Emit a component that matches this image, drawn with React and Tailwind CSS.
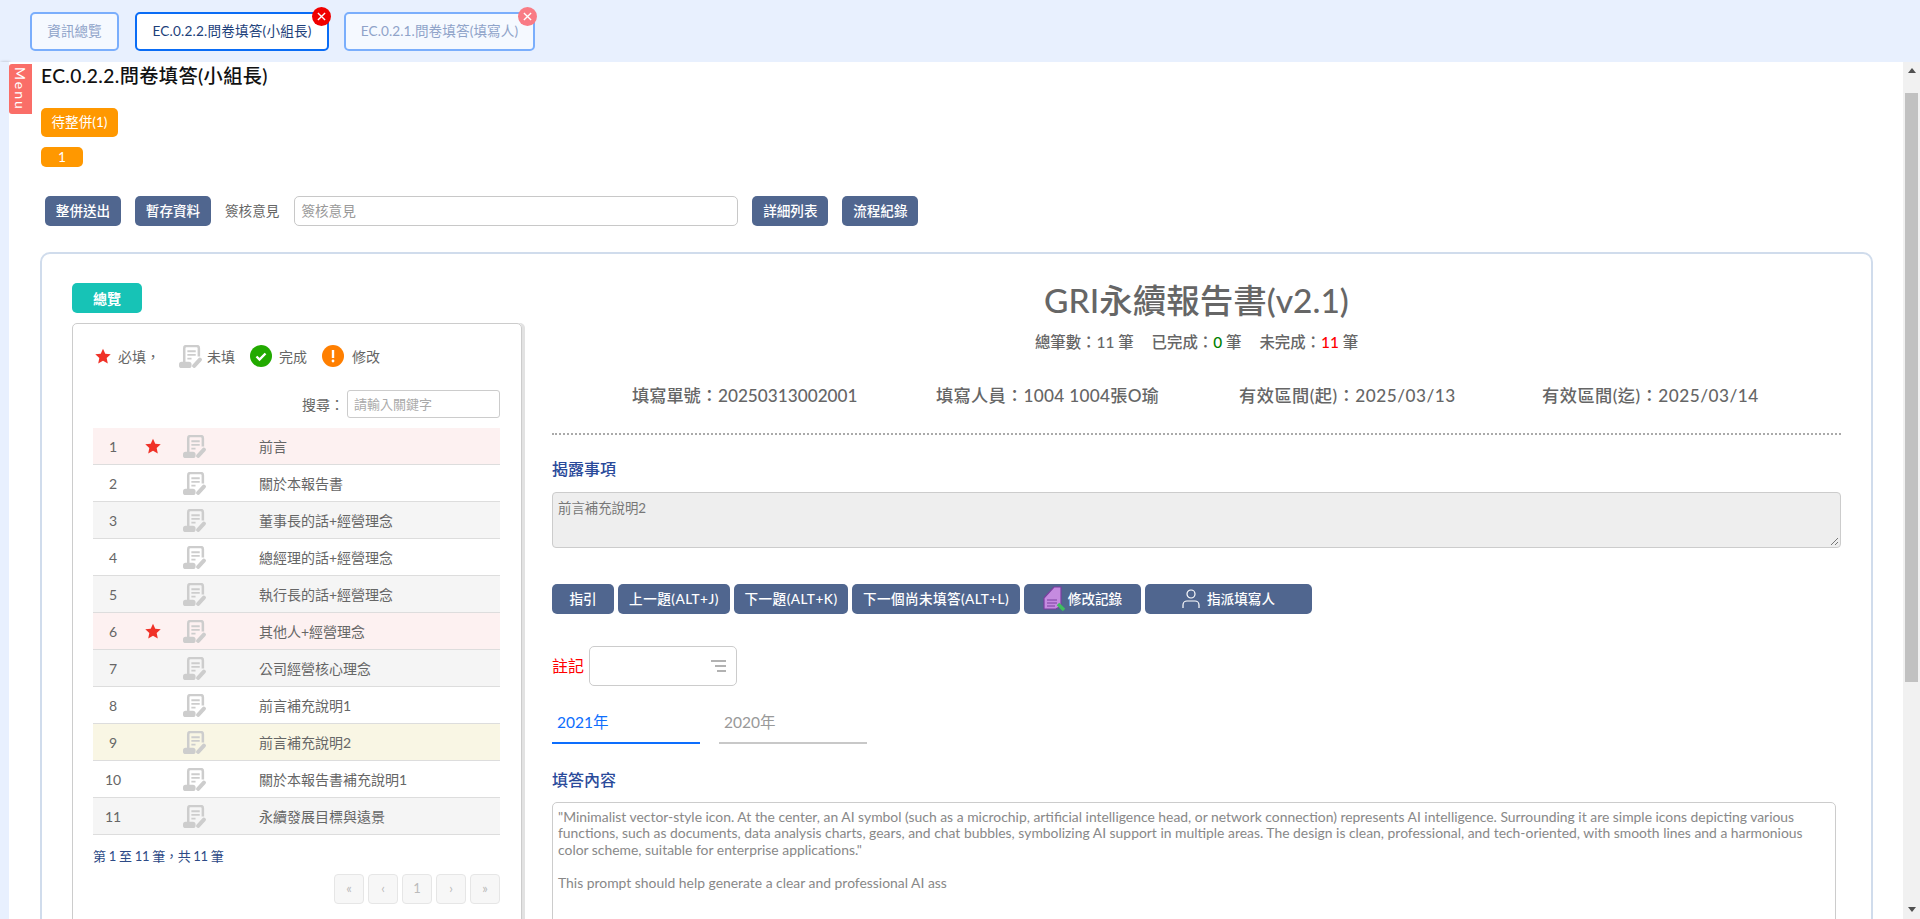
import React from "react";

const rows = [
  { no: 1, name: "前言", star: true, bg: "bg-[#fdf1f1]" },
  { no: 2, name: "關於本報告書", bg: "bg-white" },
  { no: 3, name: "董事長的話+經營理念", bg: "bg-[#f5f5f5]" },
  { no: 4, name: "總經理的話+經營理念", bg: "bg-white" },
  { no: 5, name: "執行長的話+經營理念", bg: "bg-[#f5f5f5]" },
  { no: 6, name: "其他人+經營理念", star: true, bg: "bg-[#fdf1f1]" },
  { no: 7, name: "公司經營核心理念", bg: "bg-[#f5f5f5]" },
  { no: 8, name: "前言補充說明1", bg: "bg-white" },
  { no: 9, name: "前言補充說明2", bg: "bg-[#f9f6e4]" },
  { no: 10, name: "關於本報告書補充說明1", bg: "bg-white" },
  { no: 11, name: "永續發展目標與遠景", bg: "bg-[#f5f5f5]" },
];

const Star = () => (
  <svg className="w-[16px] h-[16px]" viewBox="0 0 24 24">
    <path fill="#f03228" d="M12 1l3.4 7.6 8.2.9-6.1 5.5 1.7 8.1L12 19l-7.2 4.1 1.7-8.1L.4 9.5l8.2-.9z" />
  </svg>
);

const FormIcon = () => (
  <svg className="w-[23px] h-[23px]" viewBox="0 0 22 22" fill="none">
    <path stroke="#cdcdcd" strokeWidth="2.4" d="M5 17V3a2 2 0 0 1 2-2h10a2 2 0 0 1 2 2v8" />
    <path stroke="#cdcdcd" strokeWidth="1.8" d="M8 6h8M8 9.500h8M8 13h4" />
    <rect x="0" y="16" width="12" height="6" rx="2.500" fill="#cdcdcd" />
    <path stroke="#cdcdcd" strokeWidth="3.800" strokeLinecap="round" d="M14.500 20l5.500-6" />
  </svg>
);

const Close = ({ className }) => (
  <span className={`absolute -top-[7px] -right-[4px] w-[19px] h-[19px] rounded-full flex items-center justify-center ${className}`}>
    <svg className="w-[9px] h-[9px]" viewBox="0 0 10 10">
      <path stroke="#fff" strokeWidth="1.500" d="M1 1l8 8M9 1l-8 8" />
    </svg>
  </span>
);

const Btn = ({ children, className = "" }) => (
  <button className={`h-[30px] rounded-[5px] bg-[#50668f] text-white text-[13.6px] font-medium flex items-center justify-center ${className}`}>
    {children}
  </button>
);

const PageBtn = ({ children }) => (
  <span className="w-[30px] h-[30px] rounded-[4px] bg-[#f7f7f7] border border-[#e6e6e6] text-[#bbb] text-[13px] flex items-center justify-center">
    {children}
  </span>
);

export default function App() {
  return (
    <div className="h-[919px] overflow-hidden flex flex-col bg-[#e8f0fe] font-[Lato,'Noto_Sans_CJK_TC',sans-serif]">
      {/* Tabs */}
      <div className="h-[62px] shrink-0 flex items-start pt-[12px] pl-[30px]">
        <div className="w-[89px] h-[39px] rounded-[5px] border-2 border-[#7aaefc] bg-[#f5f9ff] text-[#8fa3c9] text-[13.6px] flex items-center justify-center">
          資訊總覽
        </div>
        <div className="relative ml-[16px] w-[194px] h-[39px] rounded-[5px] border-2 border-[#0a6cf5] bg-white text-[#1d3f7a] text-[13.6px] tracking-[0.2px] flex items-center justify-center">
          EC.0.2.2.問卷填答(小組長)
          <Close className="bg-[#f00000]" />
        </div>
        <div className="relative ml-[15px] w-[191px] h-[39px] rounded-[5px] border-2 border-[#7aaefc] bg-[#f5f9ff] text-[#8fa3c9] text-[13.6px] tracking-[0.1px] flex items-center justify-center">
          EC.0.2.1.問卷填答(填寫人)
          <Close className="bg-[#f97b85]" />
        </div>
      </div>

      <div className="flex-1 flex min-h-0">
        <div className="w-[9px] shrink-0 shadow-[1px_0_3px_rgba(0,0,0,0.25)]" />

        {/* Main */}
        <div className="relative flex-1 min-w-0 bg-white pl-[31px] overflow-hidden">
          <div className="absolute left-0 top-[2px] w-[23px] h-[50px] rounded-l-[3px] bg-[#fa6e68] text-white text-[14px] tracking-[2px] flex items-center justify-center [writing-mode:vertical-rl]">
            Menu
          </div>

          <h1 className="pt-[2px] pl-[1px] text-[19.2px] leading-[24px] font-medium tracking-[0.4px] text-[#111]">
            EC.0.2.2.問卷填答(小組長)
          </h1>
          <div className="mt-[20px] ml-[1px] w-[77px] h-[29px] rounded-[5px] bg-[#ff9800] text-white text-[13.6px] flex items-center justify-center">
            待整併(1)
          </div>
          <div className="mt-[10px] ml-[1px] w-[42px] h-[20px] rounded-[5px] bg-[#ff9800] text-white text-[13.6px] flex items-center justify-center">
            1
          </div>

          <div className="mt-[29px] ml-[5px] flex items-center">
            <Btn className="w-[76px]">整併送出</Btn>
            <Btn className="w-[76px] ml-[14px]">暫存資料</Btn>
            <span className="ml-[14px] text-[13.6px] text-[#666]">簽核意見</span>
            <input
              placeholder="簽核意見"
              className="ml-[15px] w-[444px] h-[30px] rounded-[5px] border border-[#c8c8c8] px-[6px] text-[13.6px] placeholder:text-[#999]"
            />
            <Btn className="w-[76px] ml-[14px]">詳細列表</Btn>
            <Btn className="w-[76px] ml-[14px]">流程紀錄</Btn>
          </div>

          {/* Card */}
          <div className="mt-[26px] w-[1833px] h-[800px] rounded-[10px] border-2 border-[#d0dcec] pl-[30px] pt-[29px] flex">
            {/* Left column */}
            <div className="w-[453px] shrink-0">
              <div className="w-[70px] h-[30px] rounded-[5px] bg-[#17c3b6] text-white text-[14px] font-bold flex items-center justify-center">
                總覽
              </div>
              <div className="mt-[10px] w-[450px] h-[640px] rounded-[5px] border border-[#ccc] shadow-[3px_0_0_#e2e2e2] pl-[20px] pr-[21px] pt-[21px]">
                <div className="h-[22px] flex items-center text-[14px] text-[#666]">
                  <span className="ml-[2px]"><Star /></span>
                  <span className="ml-[7px]">必填，</span>
                  <span className="ml-[19px]"><FormIcon /></span>
                  <span className="ml-[5px]">未填</span>
                  <svg className="ml-[15px] w-[22px] h-[22px]" viewBox="0 0 22 22">
                    <circle cx="11" cy="11" r="11" fill="#22aa00" />
                    <path d="M6.500 11.500l3 3 6-6" fill="none" stroke="#fff" strokeWidth="2.400" />
                  </svg>
                  <span className="ml-[7px]">完成</span>
                  <svg className="ml-[15px] w-[22px] h-[22px]" viewBox="0 0 22 22">
                    <circle cx="11" cy="11" r="11" fill="#ff7f00" />
                    <path d="M11 5v8" stroke="#fff" strokeWidth="2.400" />
                    <circle cx="11" cy="16" r="1.400" fill="#fff" />
                  </svg>
                  <span className="ml-[8px]">修改</span>
                </div>

                <div className="mt-[23px] flex items-center justify-end text-[14px] text-[#666]">
                  <span className="mr-[3px]">搜尋：</span>
                  <input
                    placeholder="請輸入關鍵字"
                    className="w-[153px] h-[28px] rounded-[3px] border border-[#ccc] px-[6px] text-[13px] placeholder:text-[#aaa]"
                  />
                </div>

                <div className="mt-[10px]">
                  {rows.map((r) => (
                    <div key={r.no} className={`h-[37px] flex items-center border-b border-[#ddd] text-[14px] text-[#666] ${r.bg}`}>
                      <span className="w-[40px] text-center">{r.no}</span>
                      <span className="w-[40px] flex justify-center">{r.star && <Star />}</span>
                      <span className="ml-[10px]"><FormIcon /></span>
                      <span className="ml-[53px]">{r.name}</span>
                    </div>
                  ))}
                </div>

                <div className="mt-[11px] text-[13px] leading-[20px] tracking-[-0.3px] text-[#2d4a86]">第 1 至 11 筆，共 11 筆</div>
                <div className="mt-[8px] flex justify-end gap-[4px]">
                  <PageBtn>«</PageBtn>
                  <PageBtn>‹</PageBtn>
                  <PageBtn>1</PageBtn>
                  <PageBtn>›</PageBtn>
                  <PageBtn>»</PageBtn>
                </div>
              </div>
            </div>

            {/* Right column */}
            <div className="ml-[27px] w-[1289px] shrink-0">
              <h2 className="text-center text-[33.5px] leading-[34px] font-medium text-[#666]">GRI永續報告書(v2.1)</h2>
              <div className="mt-[13px] text-center text-[15.4px] leading-[24px] font-medium text-[#666]">
                總筆數：11 筆<span className="ml-[18px]">已完成：<span className="text-[#008000]">0</span> 筆</span>
                <span className="ml-[18px]">未完成：<span className="text-[#f00]">11</span> 筆</span>
              </div>
              <div className="mt-[29px] pl-[80px] grid grid-cols-[304px_303px_303px_auto] text-[17.2px] leading-[26px] font-medium text-[#666]">
                <span>填寫單號：20250313002001</span>
                <span className="tracking-[0.3px]">填寫人員：1004 1004張O瑜</span>
                <span className="tracking-[0.5px]">有效區間(起)：2025/03/13</span>
                <span className="tracking-[0.5px]">有效區間(迄)：2025/03/14</span>
              </div>
              <div className="mt-[24px] border-t-2 border-dotted border-[#aaa]" />

              <div className="mt-[24px] text-[16px] leading-[20px] font-medium text-[#2a4a9a]">揭露事項</div>
              <div className="relative mt-[13px] h-[56px] rounded-[4px] border border-[#ccc] bg-[#eee] px-[5px] py-[6px] text-[13.4px] leading-[18px] text-[#777]">
                前言補充說明2
                <svg className="absolute right-[1px] bottom-[1px] w-[10px] h-[10px]" viewBox="0 0 10 10">
                  <path d="M9 2L2 9M9 6L6 9" stroke="#777" strokeWidth="1" />
                </svg>
              </div>

              <div className="mt-[36px] flex gap-[4px]">
                <Btn className="w-[62px]">指引</Btn>
                <Btn className="w-[112px] tracking-[0.5px]">上一題(ALT+J)</Btn>
                <Btn className="w-[114px] tracking-[0.5px]">下一題(ALT+K)</Btn>
                <Btn className="w-[168px] tracking-[0.4px]">下一個尚未填答(ALT+L)</Btn>
                <Btn className="w-[117px] gap-[1px]">
                  <svg className="w-[24px] h-[28px]" viewBox="0 0 24 28">
                    <path d="M1 13L11 2h7v19l-5 3H1z" fill="#c58be0" stroke="#7a3fa0" strokeWidth="1.200" />
                    <path d="M4 15h10M4 18h10M4 21h8" stroke="#7a3fa0" strokeWidth="1" />
                    <path d="M15 19l6 6" stroke="#3fbf5f" strokeWidth="3.500" />
                  </svg>
                  修改記錄
                </Btn>
                <Btn className="w-[167px] gap-[7px]">
                  <svg className="w-[18px] h-[20px]" viewBox="0 0 18 20" fill="none" stroke="#fff" strokeWidth="1.200">
                    <circle cx="9" cy="5" r="4" />
                    <path d="M1 19v-3a4 4 0 0 1 4-4h8a4 4 0 0 1 4 4v3" />
                  </svg>
                  指派填寫人
                </Btn>
              </div>

              <div className="mt-[32px] flex items-center">
                <span className="text-[16px] text-[#f00]">註記</span>
                <div className="ml-[5px] w-[148px] h-[40px] rounded-[5px] border border-[#ccc] flex items-center justify-end pr-[10px]">
                  <svg className="w-[15px] h-[12px]" viewBox="0 0 15 12">
                    <path d="M0 1h15M4 6h11M6 11h9" stroke="#999" strokeWidth="1.400" />
                  </svg>
                </div>
              </div>

              <div className="mt-[24px] flex gap-[19px]">
                <div className="w-[148px] border-b-2 border-[#0d6efd] pl-[5px] pb-[8px] text-[15.5px] leading-[24px] text-[#0d6efd]">2021年</div>
                <div className="w-[148px] border-b-2 border-[#c8c8c8] pl-[5px] pb-[8px] text-[15.5px] leading-[24px] text-[#999]">2020年</div>
              </div>

              <div className="mt-[26px] text-[16px] leading-[20px] font-medium text-[#2a4a9a]">填答內容</div>
              <div className="mt-[12px] w-[1284px] h-[200px] rounded-[5px] border border-[#ccc] px-[5px] pt-[6px] text-[13.9px] leading-[16.4px] text-[#888] whitespace-pre">
                {`"Minimalist vector-style icon. At the center, an AI symbol (such as a microchip, artificial intelligence head, or network connection) represents AI intelligence. Surrounding it are simple icons depicting various
functions, such as documents, data analysis charts, gears, and chat bubbles, symbolizing AI support in multiple areas. The design is clean, professional, and tech-oriented, with smooth lines and a harmonious
color scheme, suitable for enterprise applications."

This prompt should help generate a clear and professional AI ass`}
              </div>
            </div>
          </div>
        </div>

        {/* Scrollbar */}
        <div className="w-[17px] shrink-0 bg-[#f1f1f1] flex flex-col items-center">
          <svg className="mt-[6px] w-[8px] h-[5px]" viewBox="0 0 8 5"><path d="M4 0l4 5H0z" fill="#505050" /></svg>
          <div className="mt-[20px] w-[13px] h-[589px] bg-[#c1c1c1]" />
          <svg className="mt-auto mb-[7px] w-[8px] h-[5px]" viewBox="0 0 8 5"><path d="M4 5l4-5H0z" fill="#505050" /></svg>
        </div>
      </div>
    </div>
  );
}
